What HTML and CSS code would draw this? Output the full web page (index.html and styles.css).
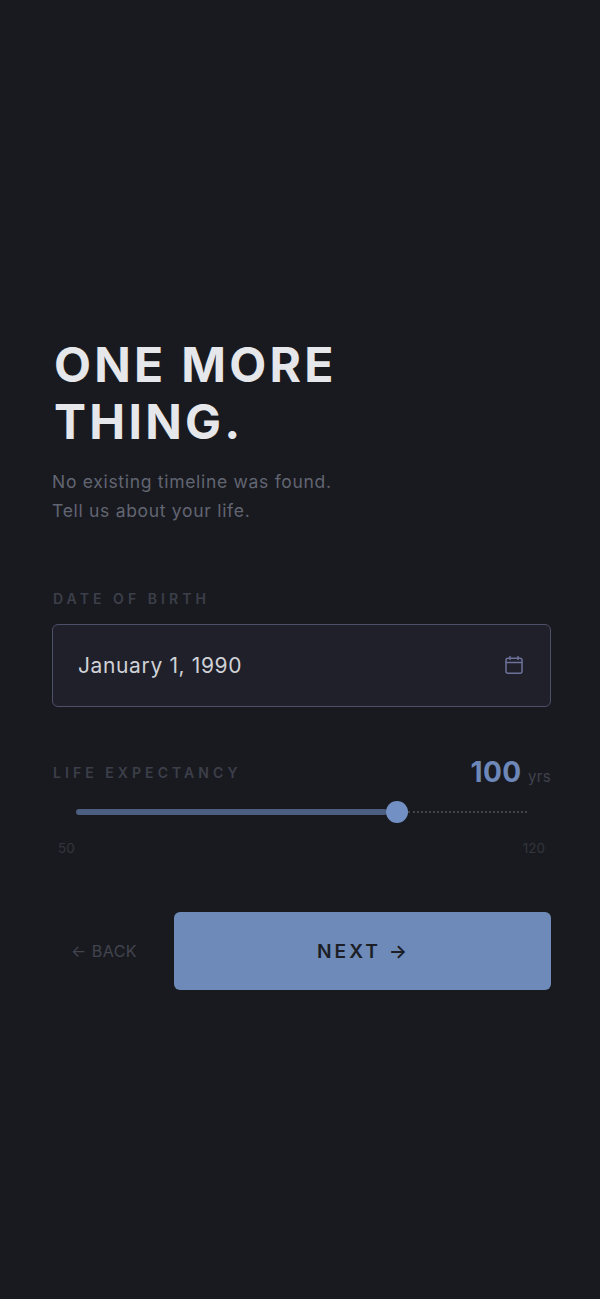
FILE: index.html
```html
<!DOCTYPE html>
<html lang="en">
<head>
<meta charset="utf-8">
<title>One more thing</title>
<link rel="stylesheet" href="styles.css">
</head>
<body>
<main class="screen">
  <h1 class="title">ONE MORE<br>THING.</h1>
  <p class="intro">No existing timeline was found.<br>Tell us about your life.</p>

  <div class="label dob-label">DATE OF BIRTH</div>
  <div class="date-field">
    <span class="date-value">January 1, 1990</span>
    <svg class="cal" viewBox="0 0 20 20" width="20" height="20" fill="none" stroke="currentColor" stroke-width="1.5" stroke-linecap="round" stroke-linejoin="round">
      <rect x="2" y="3.2" width="16" height="15" rx="2"/>
      <path d="M2 7.6h16M6 1.4v3M14 1.4v3"/>
    </svg>
  </div>

  <div class="life-head">
    <span class="label">LIFE EXPECTANCY</span>
    <span class="life-value"><b class="num">100</b> <span class="yrs">yrs</span></span>
  </div>
  <div class="slider">
    <div class="fill"></div>
    <div class="thumb"></div>
    <div class="rest"></div>
  </div>
  <div class="range"><span>50</span><span>120</span></div>

  <div class="actions">
    <button class="back" type="button">← BACK</button>
    <button class="next" type="button">NEXT →</button>
  </div>
</main>
</body>
</html>
```
FILE: styles.css
```css
* { box-sizing: border-box; }
html, body { margin: 0; height: 100%; }
body { background: #191a1f; font-family: Inter, "Liberation Sans", sans-serif; }
.screen { height: 1299px; padding: 336px 49px 0 52px; overflow: hidden; }
.title { margin: 0 0 0 2px; font-size: 48px; line-height: 57px; font-weight: 700; letter-spacing: 0.068em; color: #e6e7ea; }
.intro { margin: 17px 0 0; font-size: 17.5px; line-height: 29px; letter-spacing: 0.04em; color: #626572; }
.label { font-size: 14px; line-height: 18px; font-weight: 600; letter-spacing: 0.29em; color: #3c3f4a; }
.dob-label { margin: 65px 0 0 1px; }
.date-field { margin-top: 16px; height: 83px; display: flex; align-items: center; justify-content: space-between; padding: 0 25px; background: #1f202a; border: 1.5px solid #4c5069; border-radius: 6px; }
.date-value { font-size: 21px; letter-spacing: 0.03em; color: #cfd1d6; }
.cal { color: #6c7299; transform: translate(-1px, -1px); }
.life-head { margin: 48px 0 0 1px; height: 36px; display: flex; justify-content: space-between; align-items: center; }
.life-value { line-height: 36px; margin-top: 2px; }
.num { font-size: 28px; font-weight: 700; color: #6c87b8; letter-spacing: 0.015em; margin-right: 2px; }
.yrs { font-size: 15px; color: #3f424d; letter-spacing: 0.02em; }
.slider { margin: 9px 24px 0; height: 24px; display: flex; align-items: center; }
.fill { width: 311px; height: 6px; border-radius: 3px; background: #4d5f80; }
.thumb { width: 22px; height: 22px; border-radius: 50%; background: #7390c4; margin-left: -1px; flex: none; }
.rest { flex: 1; border-top: 2px dotted #42444e; }
.range { margin: 15px 6px 0; display: flex; justify-content: space-between; font-size: 13.5px; line-height: 18px; color: #33353e; }
.actions { margin-top: 55px; display: flex; align-items: center; }
.back { width: 122px; padding: 0 0 0 19px; text-align: left; background: none; border: 0; font: 400 16px Inter, sans-serif; letter-spacing: 0.03em; color: #42444f; }
.next { flex: 1; height: 78px; padding: 0 0 0 2px; border: 0; border-radius: 6px; background: #6e8ab8; font: 600 19.2px Inter, sans-serif; letter-spacing: 0.155em; color: #1c1e26; }
```
